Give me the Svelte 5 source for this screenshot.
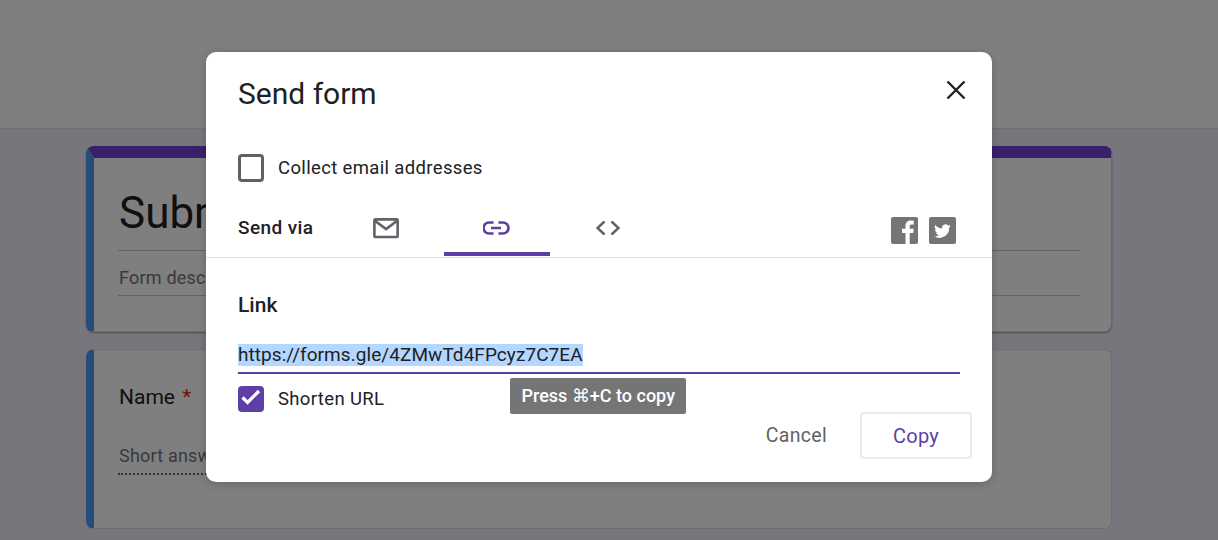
<script>
	let email = $state(false);
	let shorten = $state(true);
	const url = 'https://forms.gle/4ZMwTd4FPcyz7C7EA';
</script>

<div class="page">
	<header class="topbar"></header>
	<main class="forms">
		<section class="card title-card">
			<h1>Submit your info</h1>
			<p class="desc">Form description</p>
		</section>
		<section class="card question">
			<h2>Name <span class="req">*</span></h2>
			<p class="answer">Short answer text</p>
		</section>
	</main>

	<div class="overlay">
		<div class="dialog">
			<div class="head">
				<h3>Send form</h3>
				<button class="close" aria-label="Close">
					<svg width="24" height="24" viewBox="0 0 24 24"><path d="M3.5 3.5l17 17M20.5 3.5l-17 17" stroke="#202124" stroke-width="2.4" fill="none" /></svg>
				</button>
			</div>

			<label class="check email">
				<button class="box" class:on={email} aria-label="Collect email addresses" onclick={() => (email = !email)}></button>
				<span>Collect email addresses</span>
			</label>

			<div class="via">
				<span class="via-label">Send via</span>
				<div class="tab">
					<svg width="28" height="24" viewBox="0 0 28 24"><path d="M2.500 2.500h23a1 1 0 0 1 1 1v17a1 1 0 0 1-1 1h-23a1 1 0 0 1-1-1v-17a1 1 0 0 1 1-1zM2 4l12 9 12-9" transform="translate(2 1) scale(.93)" fill="none" stroke="#5f6368" stroke-width="2.800" /></svg>
				</div>
				<div class="tab active">
					<svg width="28" height="24" viewBox="0 0 28 24"><path d="M11.500 6.500h-4.500a5.500 5.500 0 0 0 0 11h4.500M16.500 6.500h4.500a5.500 5.500 0 0 1 0 11h-4.500M9 12h10" transform="translate(-1 0)" fill="none" stroke="#5f3ea6" stroke-width="2.700" /></svg>
				</div>
				<div class="tab">
					<svg width="28" height="24" viewBox="0 0 28 24"><path d="M10.500 5.500L3.500 12l7 6.500M17.500 5.500l7 6.500-7 6.500" transform="translate(-1 0)" fill="none" stroke="#5f6368" stroke-width="2.400" /></svg>
				</div>
				<div class="social">
					<svg width="27" height="27" viewBox="0 0 27 27"><rect width="27" height="27" rx="2" fill="#757575" /><path d="M14.500 27V16h-3.500v-4.200h3.500V9c0-3.600 2.100-5.500 5.300-5.500 1.300 0 2.500.1 2.900.2v3.700h-2c-1.700 0-2 .8-2 2v2.400h4l-.5 4.200h-3.500v11z" fill="#fff" /></svg>
					<svg width="27" height="27" viewBox="0 0 27 27"><rect width="27" height="27" rx="2" fill="#757575" /><path d="M23 8.100c-.7.300-1.500.5-2.300.600.800-.5 1.500-1.300 1.800-2.200-.8.500-1.700.8-2.600 1a4 4 0 0 0-6.900 3.700C9.700 11 6.800 9.400 4.800 7a4 4 0 0 0 1.200 5.400c-.6 0-1.300-.2-1.800-.5 0 2 1.400 3.600 3.200 4-.6.200-1.200.2-1.800.1.500 1.600 2 2.800 3.800 2.800A8.100 8.100 0 0 1 3.500 20.400a11.500 11.500 0 0 0 17.700-10.200c.7-.5 1.300-1.200 1.800-2.100z" transform="translate(2.300 2.200) scale(.84)" fill="#fff" /></svg>
				</div>
			</div>

			<div class="body">
				<div class="link-label">Link</div>
				<div class="url"><span class="sel">{url}</span></div>
				<div class="below">
					<label class="check">
						<button class="box" class:on={shorten} aria-label="Shorten URL" onclick={() => (shorten = !shorten)}>
							{#if shorten}
								<svg width="26" height="26" viewBox="0 0 26 26"><path d="M4.500 11.500l5.100 5 11.400-11.500" fill="none" stroke="#fff" stroke-width="3.200" /></svg>
							{/if}
						</button>
						<span>Shorten URL</span>
					</label>
				</div>
				<div class="tooltip">Press ⌘+C to copy</div>
				<div class="actions">
					<button class="cancel">Cancel</button>
					<button class="copy">Copy</button>
				</div>
			</div>
		</div>
	</div>
</div>

<style>
	:global(body) {
		margin: 0;
	}
	.page {
		position: relative;
		height: 540px;
		overflow: hidden;
		background: #f0ebf8;
		font-family: Roboto, 'Liberation Sans', sans-serif;
	}
	.topbar {
		height: 129px;
		background: #fff;
		border-bottom: 1px solid #e0e0e0;
		box-sizing: border-box;
	}
	.forms {
		width: 1026px;
		margin: 17px 0 0 86px;
		display: flex;
		flex-direction: column;
		gap: 17px;
	}
	.card {
		background: #fff;
		border: 1px solid #dadce0;
		border-left: 8px solid #4a9af5;
		border-radius: 8px;
		box-sizing: border-box;
		padding: 0 24px;
	}
	.title-card {
		height: 186px;
		border-top: 12px solid #7040d4;
		border-right: 1px solid #d0d0d0;
		box-shadow: 0 1px 2px rgba(0, 0, 0, 0.35);
		padding-top: 29px;
	}
	.title-card h1 {
		margin: 0 7px 0 0;
		font-size: 44px;
		font-weight: 400;
		line-height: 52px;
		text-indent: 1px;
		color: #202124;
		padding-bottom: 11px;
		border-bottom: 1px solid #c8c8c8;
	}
	.desc {
		margin: 0 7px 0 0;
		padding: 15px 0 5px;
		font-size: 18px;
		line-height: 24px;
		text-indent: 1px;
		letter-spacing: 0.2px;
		color: #70757a;
		border-bottom: 1px solid #c8c8c8;
	}
	.question {
		height: 180px;
		padding-top: 34px;
	}
	.question h2 {
		margin: 0;
		font-size: 21px;
		font-weight: 400;
		line-height: 26px;
		text-indent: 1px;
		color: #202124;
	}
	.req {
		color: #d93025;
		margin-left: 2px;
	}
	.answer {
		margin: 34px 0 0;
		width: 300px;
		font-size: 18px;
		line-height: 24px;
		text-indent: 1px;
		letter-spacing: 0.2px;
		padding-bottom: 5px;
		color: #70757a;
		border-bottom: 2px dotted #5f6368;
	}
	.overlay {
		position: absolute;
		inset: 0;
		background: rgba(0, 0, 0, 0.5);
	}
	.dialog {
		position: absolute;
		left: 206px;
		top: 52px;
		width: 786px;
		height: 430px;
		background: #fff;
		border-radius: 10px;
		color: #202124;
		box-shadow: 0 2px 10px rgba(0, 0, 0, 0.2);
	}
	.head {
		display: flex;
		justify-content: space-between;
		padding: 23px 24px 0 32px;
	}
	h3 {
		margin: 0;
		font-size: 30px;
		font-weight: 400;
		line-height: 38px;
	}
	button {
		font-family: inherit;
		background: none;
		border: 0;
		padding: 0;
	}
	.close {
		width: 24px;
		height: 24px;
		margin-top: 3px;
	}
	.check {
		display: flex;
		align-items: center;
		gap: 14px;
		font-size: 18.500px;
		letter-spacing: 0.35px;
		line-height: 26px;
	}
	.email {
		margin: 41px 0 0 32px;
	}
	.box {
		width: 26px;
		height: 28px;
		border: 3px solid #5f6368;
		border-radius: 4px;
		box-sizing: border-box;
		position: relative;
	}
	.box.on {
		background: #5f3ea6;
		border-color: #5f3ea6;
		height: 26px;
	}
	.box svg {
		position: absolute;
		left: -3px;
		top: -3px;
	}
	.via {
		display: flex;
		align-items: flex-start;
		height: 48px;
		margin-top: 27px;
		padding: 0 36px 0 32px;
		border-bottom: 1px solid #e0e0e0;
		position: relative;
	}
	.via-label {
		font-size: 19px;
		font-weight: 500;
		letter-spacing: 0.4px;
		line-height: 26px;
		margin-top: 6px;
		width: 94px;
		flex: none;
		white-space: nowrap;
	}
	.tab {
		width: 106px;
		height: 40px;
		box-sizing: border-box;
		padding-top: 7px;
		display: flex;
		justify-content: center;
		margin-right: 6px;
	}
	.tab svg {
		display: block;
	}
	.tab.active {
		height: 47px;
		border-bottom: 4px solid #5f3ea6;
		border-radius: 3px 3px 0 0;
	}
	.social {
		display: flex;
		gap: 11px;
		margin-left: auto;
		padding-top: 8px;
	}
	.body {
		position: relative;
		padding: 0 32px;
	}
	.link-label {
		font-size: 21px;
		font-weight: 500;
		line-height: 26px;
		margin-top: 34px;
	}
	.url {
		margin-top: 25px;
		height: 29px;
		border-bottom: 2px solid #5f3ea6;
		font-size: 19px;
		letter-spacing: 0.06px;
		line-height: 24px;
	}
	.sel {
		background: #b3d7ff;
		display: inline-block;
		line-height: 22px;
	}
	.below {
		margin-top: 12px;
	}
	.tooltip {
		position: absolute;
		left: 304px;
		top: 86px;
		height: 36px;
		line-height: 36px;
		padding: 0 11.500px;
		background: #757575;
		color: #fff;
		font-size: 18px;
		font-weight: 500;
		border-radius: 2px;
	}
	.actions {
		display: flex;
		justify-content: flex-end;
		align-items: center;
		gap: 33px;
		margin: 0 -12px 0 0;
	}
	.cancel {
		font-size: 19.500px;
		letter-spacing: 0.3px;
		color: #5f6368;
	}
	.copy {
		width: 112px;
		height: 47px;
		border: 2px solid #e8eaed;
		border-radius: 4px;
		font-size: 20px;
		letter-spacing: 0.3px;
		color: #5f3ea6;
	}
</style>
